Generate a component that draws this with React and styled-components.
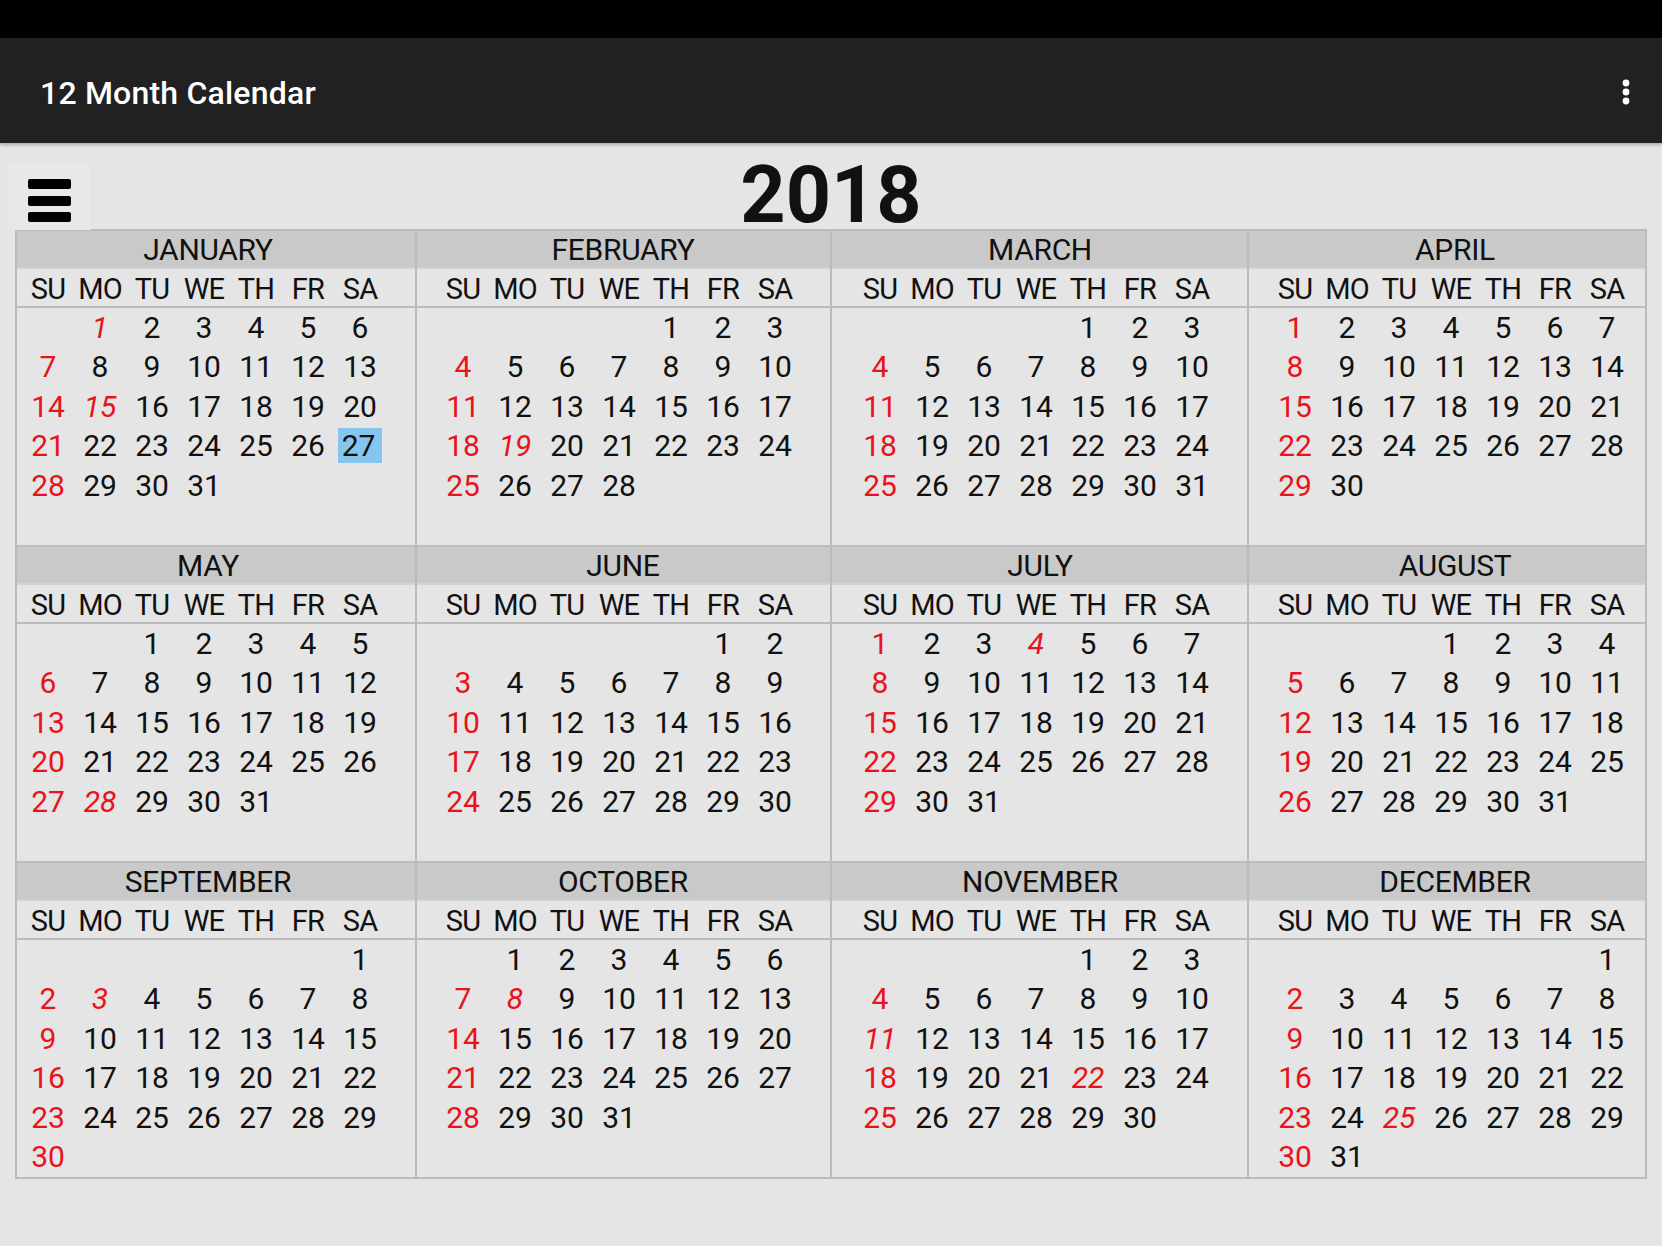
import styled, { createGlobalStyle } from 'styled-components';

const GlobalStyle = createGlobalStyle`
  * { box-sizing: border-box; }
  html, body {
    margin: 0;
    padding: 0;
    background: #e5e5e5;
  }
  body {
    font-family: Roboto, "Noto Sans", sans-serif;
    color: #111;
  }
`

const MONTHS = [
  'JANUARY', 'FEBRUARY', 'MARCH', 'APRIL', 'MAY', 'JUNE',
  'JULY', 'AUGUST', 'SEPTEMBER', 'OCTOBER', 'NOVEMBER', 'DECEMBER',
]
const WEEKDAYS = ['SU', 'MO', 'TU', 'WE', 'TH', 'FR', 'SA']
const YEAR = 2018

// holidays shown in red italics, keyed by "month-day"
const HOLIDAYS = ['0-1', '0-15', '1-19', '4-28', '6-4', '8-3', '9-8', '10-11', '10-22', '11-25']
const TODAY = '0-27'

// left inset of the day grid, per column
const PADS = [5, 20, 22, 20]

const Page = styled.div`
  min-height: 1246px;
  background: #e5e5e5;
`

const StatusBar = styled.div`
  height: 38px;
  background: #000;
`

const AppBar = styled.header`
  height: 105px;
  background: #212121;
  display: flex;
  align-items: center;
  justify-content: space-between;
  padding: 4px 32px 0 40px;
  box-shadow: 0 2px 3px rgba(0, 0, 0, 0.25);
`

const Title = styled.h1`
  margin: 0;
  color: #fff;
  font-size: 32px;
  font-weight: 500;
  letter-spacing: 0.2px;
`

const Content = styled.main`
  padding: 0 15px;
`

const Header = styled.div`
  height: 86px;
  display: grid;
  grid-template-columns: 1fr auto 1fr;
`

const MenuButton = styled.button`
  align-self: end;
  justify-self: start;
  width: 82px;
  height: 68px;
  margin: 0 0 0 -7px;
  padding: 17px 0 0 20px;
  border: none;
  background: #e8e8e8;
  display: flex;
  flex-direction: column;
  gap: 6.5px;
`

const Bar = styled.span`
  display: block;
  width: 43px;
  height: 10px;
  border-radius: 2px;
  background: #000;
`

const Year = styled.div`
  padding-top: 17px;
  font-size: 79px;
  font-weight: 700;
  line-height: 70px;
  color: #111;
`

const Grid = styled.div`
  display: grid;
  grid-template-columns: 398px 415px 417px 398px;
  border: 2px solid #bcbcbc;
`

const Panel = styled.section`
  border-left: ${(p) => (p.$first ? 'none' : '2px solid #bcbcbc')};
  border-top: ${(p) => (p.$top ? 'none' : '2px solid #bcbcbc')};
`

const MonthName = styled.div`
  height: 38px;
  background: #c9c9c9;
  border-bottom: 2px solid #d2d2d2;
  padding-left: ${(p) => p.$pad + 4}px;
  font-size: 30px;
  line-height: 38px;
  letter-spacing: -0.3px;
`

const MonthLabel = styled.div`
  width: 364px;
  text-align: center;
`

const WeekRow = styled.div`
  height: 39px;
  border-bottom: 2px solid #bcbcbc;
  padding-left: ${(p) => p.$pad}px;
  display: grid;
  grid-template-columns: repeat(7, 52px);
`

const WeekDay = styled.div`
  text-align: center;
  font-size: 29px;
  line-height: 41px;
  letter-spacing: -0.8px;
`

const Days = styled.div`
  height: 237px;
  padding-left: ${(p) => p.$pad}px;
  display: grid;
  grid-template-columns: repeat(7, 52px);
  grid-auto-rows: 39.4px;
`

const Day = styled.div`
  text-align: center;
  font-size: 30px;
  line-height: 39.4px;
  color: ${(p) => (p.$red ? '#e8131b' : '#111')};
  font-style: ${(p) => (p.$holiday ? 'italic' : 'normal')};
`

const Today = styled.span`
  display: inline-block;
  padding: 0 7px 0 4px;
  line-height: 35px;
  background: #86c6ee;
`

function Kebab() {
  return (
    <svg width="8" height="28" viewBox="0 0 8 28">
      <circle cx="4" cy="4" r="3.4" fill="#fff" />
      <circle cx="4" cy="13" r="3.4" fill="#fff" />
      <circle cx="4" cy="22" r="3.4" fill="#fff" />
    </svg>
  )
}

function Month({ index }) {
  const col = index % 4
  const pad = PADS[col]
  const first = new Date(YEAR, index, 1).getDay()
  const count = new Date(YEAR, index + 1, 0).getDate()
  const cells = []
  for (let i = 0; i < first; i++) cells.push(<div key={'e' + i} />)
  for (let d = 1; d <= count; d++) {
    const key = `${index}-${d}`
    const holiday = HOLIDAYS.includes(key)
    const sunday = (first + d - 1) % 7 === 0
    cells.push(
      <Day key={d} $red={holiday || sunday} $holiday={holiday}>
        {key === TODAY ? <Today>{d}</Today> : d}
      </Day>
    )
  }
  return (
    <Panel $first={col === 0} $top={index < 4}>
      <MonthName $pad={pad}>
        <MonthLabel>{MONTHS[index]}</MonthLabel>
      </MonthName>
      <WeekRow $pad={pad}>
        {WEEKDAYS.map((w) => (
          <WeekDay key={w}>{w}</WeekDay>
        ))}
      </WeekRow>
      <Days $pad={pad}>{cells}</Days>
    </Panel>
  )
}

function App() {
  return (
    <Page>
      <GlobalStyle />
      <StatusBar />
      <AppBar>
        <Title>12 Month Calendar</Title>
        <Kebab />
      </AppBar>
      <Content>
        <Header>
          <MenuButton aria-label="menu">
            <Bar />
            <Bar />
            <Bar />
          </MenuButton>
          <Year>{YEAR}</Year>
          <div />
        </Header>
        <Grid>
          {MONTHS.map((m, i) => (
            <Month key={m} index={i} />
          ))}
        </Grid>
      </Content>
    </Page>
  )
}

export default App;
